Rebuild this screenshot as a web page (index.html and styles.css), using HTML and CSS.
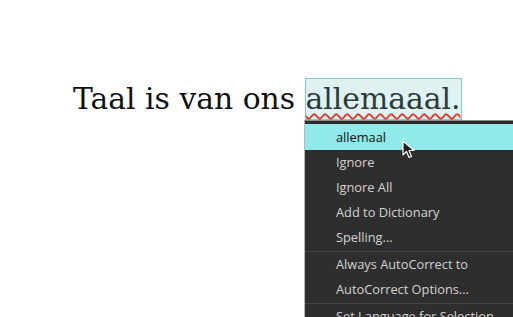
FILE: index.html
```html
<!DOCTYPE html>
<html lang="nl">
<head>
    <meta charset="UTF-8">
    <title>Spellingcontrole</title>
    <link rel="stylesheet" href="styles.css">
</head>
<body>
    <div class="page">
        <p class="sentence">Taal is van ons <span class="misspelled">allemaaal.</span></p>

        <!-- contextmenu van de spellingcontrole -->
        <ul class="context-menu">
            <li class="item active">allemaal</li>
            <li class="item">Ignore</li>
            <li class="item">Ignore All</li>
            <li class="item">Add to Dictionary</li>
            <li class="item">Spelling...</li>
            <li class="divider"></li>
            <li class="item">Always AutoCorrect to</li>
            <li class="item">AutoCorrect Options...</li>
            <li class="divider"></li>
            <li class="item">Set Language for Selection</li>
        </ul>

        <svg class="cursor" width="14" height="20" viewBox="0 0 14 20">
            <path d="M1 1 L1 15 L4.5 11.5 L7 17.5 L9.5 16.5 L7 10.5 L12 10.5 Z" fill="#222" stroke="#fff" stroke-width="1.2" stroke-linejoin="round"/>
        </svg>
    </div>
</body>
</html>
```

FILE: styles.css
```css
body {
    margin: 0;
    background-color: #fff;
    overflow: hidden;
}

.page {
    position: relative;
    width: 513px;
    height: 317px;
}

.sentence {
    margin: 0;
    padding: 78px 0 0 73px;
    font-family: "DejaVu Serif", serif;
    font-size: 29.8px;
    line-height: 40px;
    color: #111;
    white-space: nowrap;
}

.misspelled {
    display: inline-block;
    background-color: #dff1f1;
    border: 1px solid #86cccc;
    color: #2b3b3b;
    text-decoration: underline wavy #e53935;
    text-decoration-thickness: 1.5px;
    text-underline-offset: 4px;
}

.context-menu {
    position: absolute;
    left: 304px;
    top: 120px;
    width: 220px;
    margin: 0;
    padding: 3px 0 0;
    list-style: none;
    background-color: #2e2e2e;
    border-top: 1px solid #8a8a8a;
    border-left: 1px solid #b8b8b8;
    font-family: "Open Sans", sans-serif;
    font-size: 12.8px;
}

.item {
    height: 25px;
    line-height: 25px;
    padding-left: 31px;
    color: #d2d2d2;
}

.item.active {
    height: 26px;
    line-height: 26px;
    background-color: #92e9e9;
    color: #111;
}

.divider {
    height: 1px;
    margin: 1px 0 0;
    background-color: #444;
}

.cursor {
    position: absolute;
    left: 402px;
    top: 140px;
}
```
